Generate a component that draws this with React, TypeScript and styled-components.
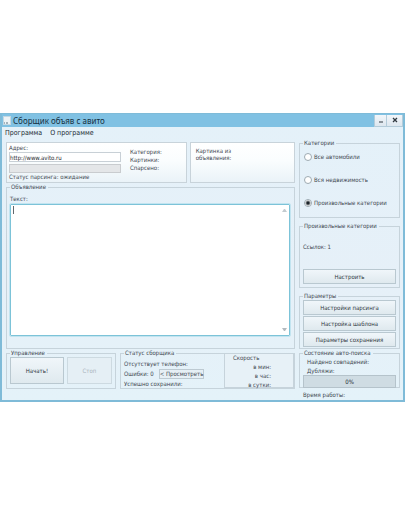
import React, { useState } from "react";
import styled, { createGlobalStyle } from "styled-components";

const Global = createGlobalStyle`
  * { box-sizing: border-box; }
  body {
    margin: 0;
    background: #fff;
    color: #3e4750;
    font: 6px/8px "DejaVu Sans Condensed", "Noto Sans", sans-serif;
  }
  button, input, textarea { font: inherit; color: inherit; }
`;

const Page = styled.main`
  padding: 113px 1px 0 0;
`;

const Window = styled.section`
  border: solid #7fbbd8;
  border-width: 1px 2px 2px;
  background: linear-gradient(#e4f1f9, #e6f0f8 60%, #e4f2f9);
`;

const TitleBar = styled.header`
  display: flex;
  align-items: center;
  height: 13px;
  padding-left: 1px;
  background: #80c1e3;
`;

const Title = styled.h1`
  flex: 1;
  margin: 0 0 0 2px;
  font: 8px/12px "Noto Sans", "Open Sans", sans-serif;
  color: #16303f;
`;

const WindowButton = styled.button`
  display: flex;
  align-items: center;
  justify-content: center;
  width: 13px;
  height: 12px;
  padding: 0;
  border: 1px solid #b4ccda;
  border-top: 0;
  background: linear-gradient(#f2f6fa, #dde7ef);
  & + & { width: 16px; border-left: 0; }
`;

const MenuBar = styled.nav`
  display: flex;
  gap: 8px;
  height: 12px;
  padding: 2px 3px;
  color: #222a32;
`;

const MenuItem = styled.button`
  padding: 0;
  border: 0;
  background: none;
  font-size: 7px;
  line-height: 8px;
`;

const Body = styled.div`
  display: grid;
  grid-template-columns: minmax(0, 1fr) 101px;
  gap: 4px;
  padding: 0 3px 1px 4px;
`;

const Column = styled.div<{ $top?: number }>`
  display: flex;
  flex-direction: column;
  padding-top: ${(p) => p.$top ?? 0}px;
  min-width: 0;
`;

const Row = styled.div<{ $gap: number }>`
  display: flex;
  gap: ${(p) => p.$gap}px;
`;

const Panel = styled.div<{ $grow: number }>`
  display: flex;
  gap: 9px;
  flex: ${(p) => p.$grow} 1 0;
  height: 41px;
  padding: 1px 2px;
  border: 1px solid #c8d3da;
  background: linear-gradient(#fff, #fafdfe 45%, #eaf3f8);
`;

const PictureNote = styled.p`
  width: 42px;
  margin: 3px;
  line-height: 7px;
`;

const Address = styled.div`
  display: flex;
  flex-direction: column;
  width: 112px;
`;

const AddressInput = styled.input`
  width: 100%;
  height: 12px;
  margin-bottom: 2px;
  padding: 0;
  border: 1px solid #c8d0d6;
  background: #fff;
  color: #20272d;
`;

const Progress = styled.div<{ $tall?: boolean }>`
  display: flex;
  align-items: center;
  justify-content: center;
  height: ${(p) => (p.$tall ? 13 : 9)}px;
  flex: none;
  border: 1px solid ${(p) => (p.$tall ? "#b5c3cb" : "#c9cccf")};
  background: ${(p) => (p.$tall ? "#cfdce3" : "#e4e6e8")};
  color: #222a32;
`;

const Facts = styled.div`
  display: flex;
  flex-direction: column;
  padding-top: 4px;
`;

const Group = styled.fieldset<{ $height: number; $grow?: string }>`
  min-width: 0;
  height: ${(p) => p.$height}px;
  flex: ${(p) => p.$grow ?? "none"};
  margin: 0;
  padding: 0 3px;
  border: 1px solid #c6d3db;
`;

const Legend = styled.legend`
  height: 8px;
  padding: 0 2px 0 1px;
`;

const TextLabel = styled.label`
  display: block;
  padding: 4px 0 1px;
`;

const AdText = styled.textarea`
  display: block;
  width: 100%;
  height: 132px;
  padding: 2px 3px;
  border: 1px solid #7cc3d8;
  border-radius: 1px;
  outline: 1px solid #c2e4f0;
  background: #fff;
  resize: none;
  overflow: hidden;
`;

const AdArea = styled.div`
  position: relative;
  padding-right: 1px;
`;

const Caret = styled.span`
  position: absolute;
  top: 2px;
  left: 3px;
  width: 1px;
  height: 8px;
  background: #60686e;
`;

const ScrollArrow = styled.svg<{ $bottom?: boolean }>`
  position: absolute;
  right: 4px;
  ${(p) => (p.$bottom ? "bottom: 4px;" : "top: 4px;")}
`;

const Button = styled.button<{ $height: number; $grow?: number }>`
  display: block;
  ${(p) => (p.$grow ? `flex: ${p.$grow} 1 0;` : "width: 100%;")}
  height: ${(p) => p.$height}px;
  padding: 0;
  border: 1px solid #b9c8d0;
  background: linear-gradient(#f0f6fa, #dfe9ee);
  color: #2f383f;
  &:disabled { color: #a9b4bb; border-color: #cddae1; background: #e5eff5; }
`;

const ViewButton = styled.button`
  height: 10px;
  padding: 0;
  border: 1px solid #bdcad2;
  background: #e6eff5;
  line-height: 8px;
`;

const StatusLine = styled.div`
  display: flex;
  align-items: center;
  gap: 5px;
  height: 10px;
  white-space: nowrap;
`;

const StatusBody = styled.div`
  padding: 2px 0;
`;

const StatusArea = styled.div`
  display: flex;
  flex: 175 1 0;
  min-width: 0;
  position: relative;
`;

const Speed = styled.div`
  position: absolute;
  right: 1px;
  top: 4px;
  bottom: 1px;
  width: 70px;
  padding: 0 8px;
  border: 1px solid #c6d3db;
  background: #e7f1f7;
`;

const SpeedValues = styled.div`
  width: 38px;
  text-align: right;
  line-height: 9px;
`;

const Radios = styled.div`
  display: flex;
  flex-direction: column;
  gap: 15px;
  padding: 6px 1px;
`;

const RadioLabel = styled.label`
  display: flex;
  align-items: center;
  gap: 2px;
  height: 8px;
  white-space: nowrap;
`;

const Radio = styled.input`
  appearance: none;
  width: 8px;
  height: 8px;
  flex: none;
  margin: 0;
  border: 1px solid #9daab2;
  border-radius: 50%;
  background: #fff;
  &:checked { background: radial-gradient(circle, #1b2329 0 1px, #fff 3px); }
`;

const Stack = styled.div<{ $top: number; $gap: number }>`
  display: flex;
  flex-direction: column;
  gap: ${(p) => p.$gap}px;
  padding-top: ${(p) => p.$top}px;
`;

const Runtime = styled.p`
  margin: 3px 4px 0;
`;

const Indent = styled.div`
  padding-left: 4px;
  line-height: 9px;
  white-space: nowrap;
`;

const categories = ["Все автомобили", "Вся недвижимость", "Произвольные категории"];

export default function App() {
  const [category, setCategory] = useState(2);
  return (
    <Page>
      <Global />
      <Window>
        <TitleBar>
          <svg width="8" height="9" viewBox="0 0 8 9" aria-hidden="true">
            <rect x="0.5" y="0.5" width="7" height="8" fill="#edf3f6" stroke="#c5d8e2" />
            <path d="M1 7h1M3 7h2" stroke="#587080" />
          </svg>
          <Title>Сборщик объяв с авито</Title>
          <WindowButton aria-label="Свернуть">
            <svg width="6" height="6"><path d="M1 5h4" stroke="#303940" /></svg>
          </WindowButton>
          <WindowButton aria-label="Закрыть">
            <svg width="6" height="6"><path d="M1 1l4 4M5 1L1 5" stroke="#303940" strokeWidth="1.3" /></svg>
          </WindowButton>
        </TitleBar>
        <MenuBar>
          <MenuItem>Программа</MenuItem>
          <MenuItem>О программе</MenuItem>
        </MenuBar>
        <Body>
          <Column $top={3}>
            <Row $gap={3}>
              <Panel $grow={174}>
                <Address>
                  <label htmlFor="address">Адрес:</label>
                  <AddressInput id="address" defaultValue="http://www.avito.ru" />
                  <Progress />
                  <span>Статус парсинга: ожидание</span>
                </Address>
                <Facts>
                  <span>Категория:</span>
                  <span>Картинки:</span>
                  <span>Спарсено:</span>
                </Facts>
              </Panel>
              <Panel $grow={99}>
                <PictureNote>Картинка из объявления:</PictureNote>
              </Panel>
            </Row>
            <Group $height={166}>
              <Legend>Объявление</Legend>
              <TextLabel htmlFor="ad">Текст:</TextLabel>
              <AdArea>
                <AdText id="ad" />
                <Caret />
                <ScrollArrow width="5" height="4"><path d="M0 4l2-3h1l2 3z" fill="#c3cbd0" /></ScrollArrow>
                <ScrollArrow $bottom width="5" height="4"><path d="M0 0l2 3h1l2-3z" fill="#b2babf" /></ScrollArrow>
              </AdArea>
            </Group>
            <Row $gap={4}>
              <Group $height={40} $grow="102 1 0">
                <Legend>Управление</Legend>
                <Row $gap={3}>
                  <Button $height={27} $grow={54}>Начать!</Button>
                  <Button $height={27} $grow={45} disabled>Стоп</Button>
                </Row>
              </Group>
              <StatusArea>
                <Group $height={40} $grow="1">
                  <Legend>Статус сборщика</Legend>
                  <StatusBody>
                    <StatusLine>Отсутствует телефон:</StatusLine>
                    <StatusLine>
                      Ошибки: 0 <ViewButton>&lt; Просмотреть</ViewButton>
                    </StatusLine>
                    <StatusLine>Успешно сохранили:</StatusLine>
                  </StatusBody>
                </Group>
                <Speed>
                  Скорость
                  <SpeedValues>в мин:<br />в час:<br />в сутки:</SpeedValues>
                </Speed>
              </StatusArea>
            </Row>
          </Column>
          <Column>
            <Group $height={79}>
              <Legend>Категории</Legend>
              <Radios>
                {categories.map((name, i) => (
                  <RadioLabel key={name}>
                    <Radio type="radio" name="category" checked={category === i} onChange={() => setCategory(i)} />
                    {name}
                  </RadioLabel>
                ))}
              </Radios>
            </Group>
            <Stack $top={4} $gap={4}>
              <Group $height={66}>
                <Legend>Произвольные категории</Legend>
                <Stack $top={13} $gap={18}>
                  <span>Ссылок: 1</span>
                  <Button $height={15}>Настроить</Button>
                </Stack>
              </Group>
              <Group $height={57}>
                <Legend>Параметры</Legend>
                <Stack $top={0} $gap={1}>
                  <Button $height={15}>Настройки парсинга</Button>
                  <Button $height={15}>Настройка шаблона</Button>
                  <Button $height={15}>Параметры сохранения</Button>
                </Stack>
              </Group>
            </Stack>
            <Group $height={39}>
              <Legend>Состояние авто-поиска</Legend>
              <Indent>Найдено совпадений:<br />Дубляжи:</Indent>
              <Progress $tall>0%</Progress>
            </Group>
            <Runtime>Время работы:</Runtime>
          </Column>
        </Body>
      </Window>
    </Page>
  );
}
